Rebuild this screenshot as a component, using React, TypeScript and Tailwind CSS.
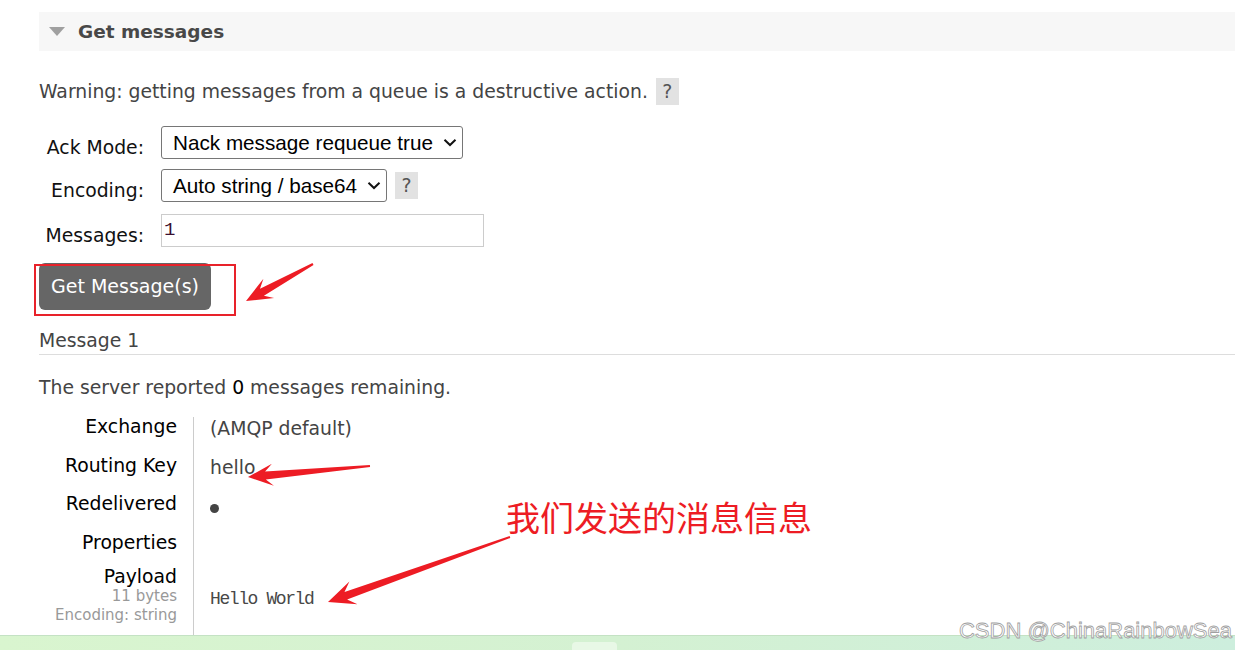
import React from "react";

// 箭头多边形：尾部细，头部带倒钩
function arrowPoints(tx: number, ty: number, hx: number, hy: number, headLen = 24, headW = 11, neckW = 4, tailW = 1) {
	const dx = hx - tx;
	const dy = hy - ty;
	const len = Math.hypot(dx, dy);
	const ux = dx / len;
	const uy = dy / len;
	const nx = -uy;
	const ny = ux;
	const nkx = hx - ux * headLen * 0.7;
	const nky = hy - uy * headLen * 0.7;
	const bx = hx - ux * headLen;
	const by = hy - uy * headLen;
	const pts = [
		[tx + nx * tailW, ty + ny * tailW],
		[nkx + nx * neckW, nky + ny * neckW],
		[bx + nx * headW, by + ny * headW],
		[hx, hy],
		[bx - nx * headW, by - ny * headW],
		[nkx - nx * neckW, nky - ny * neckW],
		[tx - nx * tailW, ty - ny * tailW],
	];
	return pts.map((p) => `${p[0].toFixed(1)},${p[1].toFixed(1)}`).join(" ");
}

function HelpBox({ className = "" }: { className?: string }) {
	return (
		<span
			className={`inline-flex w-[23px] h-[27px] items-center justify-center bg-[#e2e2e2] text-[#555] text-[19px] ${className}`}
		>
			?
		</span>
	);
}

function FakeSelect({ text, width }: { text: string; width: string }) {
	return (
		<div
			className={`ml-[17px] ${width} h-[33px] pl-[11px] pr-[5px] border border-[#767676] rounded-[3px] bg-white flex items-center justify-between text-black text-[20.7px] font-['Liberation_Sans',sans-serif]`}
		>
			<span>{text}</span>
			<svg width="14" height="9" viewBox="0 0 14 9">
				<path d="M1.5 1.8 L7 7 L12.5 1.8" fill="none" stroke="#111" strokeWidth="2" />
			</svg>
		</div>
	);
}

export default function App() {
	const rows = [
		{ label: "Exchange", value: "(AMQP default)", h: "h-[39px]" },
		{ label: "Routing Key", value: "hello", h: "h-[38px]" },
		{ label: "Redelivered", value: "bullet", h: "h-[39px]" },
		{ label: "Properties", value: "", h: "h-[34px]" },
	];

	return (
		<div className="relative w-[1235px] h-[650px] overflow-hidden bg-white font-['DejaVu_Sans',sans-serif] text-[18.8px] text-[#444]">
			<div className="h-[635px] overflow-hidden pl-[39px] pt-[12px]">
				{/* Get messages 标题栏 */}
				<div className="h-[39px] bg-[#f7f7f7] flex items-center">
					<span className="ml-[10px] w-0 h-0 border-l-[8px] border-r-[8px] border-t-[9px] border-l-transparent border-r-transparent border-t-[#a0a0a0]" />
					<span className="ml-[13px] font-bold text-[18.5px] text-[#484848]">Get messages</span>
				</div>

				<div className="mt-[27px] flex items-center h-[26px] leading-[26px]">
					<span className="pt-[2px]">Warning: getting messages from a queue is a destructive action.</span>
					<HelpBox className="ml-[8px]" />
				</div>

				{/* 表单 */}
				<div className="mt-[22px] flex flex-col">
					<div className="flex items-start h-[33px]">
						<span className="w-[105px] text-right pt-[10px] leading-[23px] text-[#111]">Ack Mode:</span>
						<FakeSelect text="Nack message requeue true" width="w-[302px]" />
					</div>
					<div className="mt-[10px] flex items-start h-[33px]">
						<span className="w-[105px] text-right pt-[10px] leading-[23px] text-[#111]">Encoding:</span>
						<FakeSelect text="Auto string / base64" width="w-[226px]" />
						<HelpBox className="ml-[8px] mt-[3px]" />
					</div>
					<div className="mt-[12px] flex items-start h-[33px]">
						<span className="w-[105px] text-right pt-[10px] leading-[23px] text-[#111]">Messages:</span>
						<div className="ml-[17px] w-[323px] h-[33px] border border-[#cccccc] pl-[2px] flex items-center font-['Liberation_Mono',monospace] text-[19px] text-[#3a1030]">
							1
						</div>
					</div>
				</div>

				<button className="mt-[16px] w-[172px] h-[47px] rounded-[6px] bg-[#666666] text-white text-[19px]">
					Get Message(s)
				</button>

				<div className="mt-[16px] pt-[2px] leading-[26px] border-b border-[#dddddd]">Message 1</div>

				<div className="mt-[20px] leading-[26px]">
					The server reported <span className="text-black">0</span> messages remaining.
				</div>

				{/* 消息详情表 */}
				<div className="mt-[16px] grid grid-cols-[154px_1fr]">
					{rows.map((r) => (
						<React.Fragment key={r.label}>
							<div className={`${r.h} pt-[1px] pr-[16px] text-right leading-[18px] text-black`}>{r.label}</div>
							<div className={`${r.h} border-l border-[#cccccc] pl-[16px] leading-[24px]`}>
								{r.value === "bullet" ? (
									<span className="inline-block mt-[10px] w-[9px] h-[9px] rounded-full bg-[#444]" />
								) : (
									r.value
								)}
							</div>
						</React.Fragment>
					))}
					<div className="h-[70px] pt-[1px] pr-[16px] text-right flex flex-col">
						<span className="leading-[18px] text-black">Payload</span>
						<span className="mt-[1px] leading-[19px] text-[15px] text-[#999]">11 bytes</span>
						<span className="leading-[19px] text-[15px] text-[#999]">Encoding: string</span>
					</div>
					<div className="h-[70px] border-l border-[#cccccc] pl-[16px] pb-[5px] flex items-center font-['Liberation_Mono',monospace] text-[18px] tracking-[-1.4px] text-[#484848]">
						Hello World
					</div>
				</div>
			</div>

			{/* 底部绿色条 */}
			<div className="relative h-[15px] border-t border-[#c4e2c4] bg-gradient-to-r from-[#d9f5cf] via-[#d4f1d2] to-[#cdeedd]">
				<div className="absolute left-[572px] top-[6px] w-[45px] h-[10px] rounded-t-[4px] bg-[#e8f8e6]" />
			</div>

			{/* 标注 */}
			<div className="absolute left-[34px] top-[264px] w-[202px] h-[52px] border-2 border-[#e8222a]" />
			<svg className="absolute left-0 top-0 pointer-events-none" width="1235" height="650">
				<polygon points={arrowPoints(313, 264, 246, 301, 26, 11, 4, 1)} fill="#ed1c24" />
				<polygon points={arrowPoints(370, 466, 248, 477, 25, 11, 4, 1)} fill="#ed1c24" />
				<polygon points={arrowPoints(510, 537, 328, 602, 27, 12, 4, 1)} fill="#ed1c24" />
			</svg>
			<div className="absolute left-[506px] top-[495px] text-[34px] leading-[44px] text-[#ed1c24] font-['Noto_Sans_CJK_SC',sans-serif]">
				我们发送的消息信息
			</div>
			<div className="absolute right-[3px] top-[617px] text-[22px] leading-[28px] text-white font-['Liberation_Sans',sans-serif] [-webkit-text-stroke:0.8px_#a0a0a0]">
				CSDN @ChinaRainbowSea
			</div>
		</div>
	);
}
